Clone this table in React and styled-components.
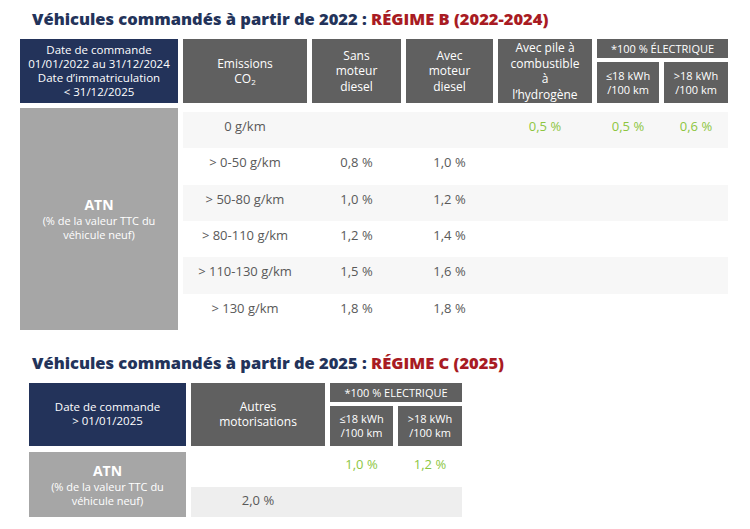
import React from "react";
import styled, { createGlobalStyle } from "styled-components";

const Colors = {
  navy: "#23335a",
  red: "#a81b23",
  dark: "#606060",
  atn: "#a6a6a6",
  text: "#595959",
  green: "#8dc63f",
  stripe: "#f7f7f7",
  stripe2: "#eeeeee",
};

const GlobalStyle = createGlobalStyle`
  html, body {
    margin: 0;
    padding: 0;
    background: #fff;
  }
  body {
    font-family: "Open Sans", "Liberation Sans", sans-serif;
  }
`;

const TOP_COLS = [158, 124, 89, 87, 94, 62, 64];
const BOTTOM_COLS = [157, 134, 63, 64];

const topRows = [
  { co2: "0 g/km", values: ["", "", "0,5 %", "0,5 %", "0,6 %"] },
  { co2: "> 0-50 g/km", values: ["0,8 %", "1,0 %", "", "", ""] },
  { co2: "> 50-80 g/km", values: ["1,0 %", "1,2 %", "", "", ""] },
  { co2: "> 80-110 g/km", values: ["1,2 %", "1,4 %", "", "", ""] },
  { co2: "> 110-130 g/km", values: ["1,5 %", "1,6 %", "", "", ""] },
  { co2: "> 130 g/km", values: ["1,8 %", "1,8 %", "", "", ""] },
];

const px = (cols) => cols.map((c) => c + "px").join(" ");

export default function App() {
  return <Page>
    <GlobalStyle/>
    <Section>
      <Title>Véhicules commandés à partir de 2022 : <Red>RÉGIME B (2022-2024)</Red></Title>
      <HeadGrid $cols={px(TOP_COLS)} $rows="19px 41px">
        <HeadCell $navy $span>
          <span>Date de commande<br/>01/01/2022 au 31/12/2024<br/>Date d’immatriculation<br/>&lt; 31/12/2025</span>
        </HeadCell>
        <HeadCell $span><span>Emissions<br/>CO<Sub>2</Sub></span></HeadCell>
        <HeadCell $span><span>Sans<br/>moteur<br/>diesel</span></HeadCell>
        <HeadCell $span><span>Avec<br/>moteur<br/>diesel</span></HeadCell>
        <HeadCell $span><span>Avec pile à<br/>combustible<br/>à<br/>l’hydrogène</span></HeadCell>
        <ElecHead>*100 % ÉLECTRIQUE</ElecHead>
        <SubHead><span>≤18 kWh<br/>/100 km</span></SubHead>
        <SubHead><span>&gt;18 kWh<br/>/100 km</span></SubHead>
      </HeadGrid>
      <Body>
        <AtnCell $w={TOP_COLS[0]}>
          <AtnTitle>ATN</AtnTitle>
          <AtnNote>(% de la valeur TTC du<br/>véhicule neuf)</AtnNote>
        </AtnCell>
        <RowList $pad={4}>
          {topRows.map((r, i) => (
            <DataRow key={i} $cols={px(TOP_COLS.slice(1))} $bg={i % 2 === 0 ? Colors.stripe : "#fff"} $h={36.33} $pt={7}>
              <DataCell>{r.co2}</DataCell>
              {r.values.map((v, j) => (
                <DataCell key={j} $green={j >= 2}>{v}</DataCell>
              ))}
            </DataRow>
          ))}
        </RowList>
      </Body>
    </Section>

    <Section $top={23} $left={9}>
      <Title $indent={9}>Véhicules commandés à partir de 2025 : <Red>RÉGIME C (2025)</Red></Title>
      <HeadGrid $cols={px(BOTTOM_COLS)} $rows="19px 40px">
        <HeadCell $navy $span><span>Date de commande<br/>&gt; 01/01/2025</span></HeadCell>
        <HeadCell $span><span>Autres<br/>motorisations</span></HeadCell>
        <ElecHead>*100 % ELECTRIQUE</ElecHead>
        <SubHead><span>≤18 kWh<br/>/100 km</span></SubHead>
        <SubHead><span>&gt;18 kWh<br/>/100 km</span></SubHead>
      </HeadGrid>
      <Body $top={6}>
        <AtnCell $w={BOTTOM_COLS[0]}>
          <AtnTitle>ATN</AtnTitle>
          <AtnNote>(% de la valeur TTC du<br/>véhicule neuf)</AtnNote>
        </AtnCell>
        <RowList>
          <DataRow $cols={px(BOTTOM_COLS.slice(1))} $bg="#fff" $h={35} $pt={5}>
            <DataCell></DataCell>
            <DataCell $green>1,0 %</DataCell>
            <DataCell $green>1,2 %</DataCell>
          </DataRow>
          <DataRow $cols={px(BOTTOM_COLS.slice(1))} $bg={Colors.stripe2} $h={30} $pt={6}>
            <DataCell>2,0 %</DataCell>
            <DataCell></DataCell>
            <DataCell></DataCell>
          </DataRow>
        </RowList>
      </Body>
    </Section>
  </Page>;
}

const Page = styled.div`
  width: 750px;
  height: 529px;
  padding: 9px 0 0 20px;
  box-sizing: border-box;
  overflow: hidden;
`;

const Section = styled.div`
  margin-top: ${p => p.$top || 0}px;
  margin-left: ${p => p.$left || 0}px;
  display: flex;
  flex-direction: column;
`;

const Title = styled.h2`
  margin: 0 0 10px ${p => 12 - (p.$indent || 0)}px;
  font-size: 16.5px;
  line-height: 20px;
  font-weight: 800;
  color: ${Colors.navy};
  white-space: nowrap;
`;

const Red = styled.span`
  color: ${Colors.red};
`;

const HeadGrid = styled.div`
  display: grid;
  grid-template-columns: ${p => p.$cols};
  grid-template-rows: ${p => p.$rows};
  column-gap: 5px;
  row-gap: 4px;
`;

const HeadCell = styled.div`
  grid-row: ${p => p.$span ? "1 / span 2" : "auto"};
  background: ${p => p.$navy ? Colors.navy : Colors.dark};
  color: #fff;
  font-size: ${p => p.$navy ? "11.5px" : "12px"};
  line-height: ${p => p.$navy ? "14px" : "15.5px"};
  display: flex;
  align-items: center;
  justify-content: center;
  text-align: center;
`;

const ElecHead = styled.div`
  grid-column: span 2;
  background: ${Colors.dark};
  color: #fff;
  font-size: 11px;
  display: flex;
  align-items: center;
  justify-content: center;
  white-space: nowrap;
`;

const SubHead = styled.div`
  grid-row: 2;
  background: ${Colors.dark};
  color: #fff;
  font-size: 11px;
  line-height: 14px;
  display: flex;
  align-items: center;
  justify-content: center;
  text-align: center;
`;

const Sub = styled.sub`
  font-size: 8px;
  vertical-align: -2px;
  line-height: 0;
`;

const Body = styled.div`
  display: flex;
  gap: 5px;
  margin-top: ${p => p.$top || 5}px;
`;

const AtnCell = styled.div`
  width: ${p => p.$w}px;
  flex-shrink: 0;
  background: ${Colors.atn};
  color: #fff;
  display: flex;
  flex-direction: column;
  align-items: center;
  justify-content: center;
  text-align: center;
`;

const AtnTitle = styled.div`
  font-size: 14px;
  font-weight: 700;
  line-height: 19px;
`;

const AtnNote = styled.div`
  font-size: 11px;
  line-height: 14px;
`;

const RowList = styled.div`
  display: flex;
  flex-direction: column;
  padding-top: ${p => p.$pad || 0}px;
`;

const DataRow = styled.div`
  display: grid;
  grid-template-columns: ${p => p.$cols};
  column-gap: 5px;
  height: ${p => p.$h}px;
  box-sizing: border-box;
  padding-top: ${p => p.$pt}px;
  background: ${p => p.$bg};
`;

const DataCell = styled.div`
  font-size: 13px;
  line-height: 15px;
  text-align: center;
  color: ${p => p.$green ? Colors.green : Colors.text};
`;
